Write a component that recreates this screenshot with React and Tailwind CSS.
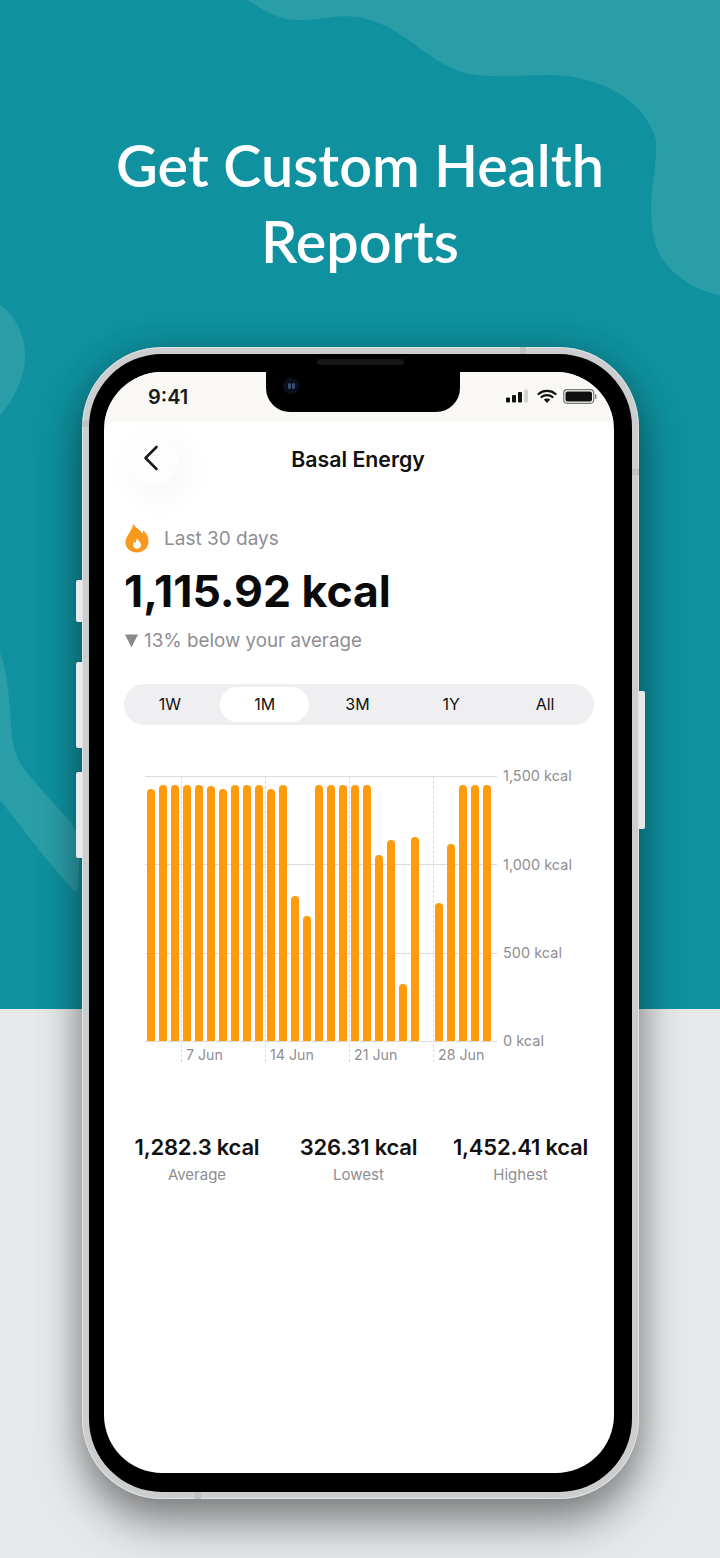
const TOP = 785;
const BASE = 1041.3;
const tops = [789.3,TOP,TOP,TOP,TOP,786.7,789.3,TOP,TOP,TOP,789.3,TOP,896.3,916,TOP,TOP,TOP,TOP,TOP,855.7,840.3,984,837.7,null,903,844,TOP,TOP,TOP];
const grid = [["1,500 kcal",0],["1,000 kcal",88.5],["500 kcal",177],["0 kcal",265]];
const ranges = ["1W","1M","3M","1Y","All"];
const ticks = ["7 Jun","14 Jun","21 Jun","28 Jun"];
const stats = [["1,282.3 kcal","Average"],["326.31 kcal","Lowest"],["1,452.41 kcal","Highest"]];

function Flame(){return(
  <svg width="24" height="30" viewBox="0 0 24 30" className="shrink-0">
    <path d="M8.500 0.500c.2 3 3.500 4.300 6.500 7 1 1 1.700 2 2.200 3 .7-.7 1-1.800.9-3.200 3 2.600 5.400 6.200 5.400 11 0 6.500-4.800 11.200-11.500 11.200S.5 25 .5 19.500c0-4 1.800-6.500 3.800-9.500C6 7 7.800 4 8.500 .5z" fill="#f8981d"/>
    <path d="M12.300 15.500c.4 1.800 3.700 3.200 3.700 6.400 0 2.200-1.800 3.800-4 3.800s-4-1.600-4-3.700c0-1.300.6-2.400 1.500-3.200.2.800.6 1.300 1.200 1.500-.2-1.800.3-3.500 1.600-4.800z" fill="#fff"/>
  </svg>
)}

export default function App(){
  return(
    <div className="relative w-[720px] h-[1558px] overflow-hidden bg-[#e6e8ea] font-['Inter',sans-serif]">
      <div className="absolute inset-x-0 top-0 h-[1009px] bg-[#0f919f]"/>
      <svg className="absolute left-0 top-0" width="720" height="1009" viewBox="0 0 720 1009">
        <path fill="#2a9ea8" d="M248 0C268 14 280 20 298 20C320 20 338 14 358 17C385 22 400 35 413 43C435 60 452 72 477 75C510 79 540 72 573 77C610 84 632 100 642 113C652 128 656 135 656 143C657 170 650 190 651 213C652 235 656 250 663 260C678 280 700 292 720 295L720 0Z"/>
        <path fill="#2a9ea8" d="M0 305C15 315 25 335 25 355C25 380 12 402 0 415Z"/>
        <path fill="#2a9ea8" d="M0 653C6 665 9 690 12 736C14 752 18 762 28 774C40 788 55 805 67 818C76 828 80 840 80 850L78 889C76 892 74 891 72 889L43 855L0 800Z"/>
      </svg>
      <div className="relative flex flex-col items-start">
        <h1 className="w-full pt-[127px] text-center text-[57.500px] leading-[76px] font-semibold text-white font-['Lato',sans-serif]">
          Get Custom Health<br/>Reports
        </h1>
        <div className="relative mt-[68px] ml-[82px] w-[557px] h-[1152px] rounded-[80px] bg-[#cbcdce] p-[7px] shadow-[0_24px_44px_rgba(0,0,0,0.42),0_0_34px_rgba(0,0,0,0.14),inset_0_0_0_1px_rgba(255,255,255,0.45)]">
          <div className="absolute left-[-6px] top-[233px] w-[6px] h-[42px] rounded-l-[2px] bg-[#e6e9e9]"/>
          <div className="absolute left-[-6px] top-[315px] w-[6px] h-[86px] rounded-l-[2px] bg-[#e6e9e9]"/>
          <div className="absolute left-[-6px] top-[425px] w-[6px] h-[86px] rounded-l-[2px] bg-[#e6e9e9]"/>
          <div className="absolute right-[-6px] top-[344px] w-[6px] h-[138px] rounded-r-[2px] bg-[#e6e9e9]"/>
          <div className="absolute left-[438px] top-0 w-[6px] h-[7px] bg-[#bfc1c2]"/>
          <div className="absolute left-[113px] bottom-0 w-[6px] h-[7px] bg-[#bfc1c2]"/>
          <div className="absolute left-0 top-[74px] w-[7px] h-[6px] bg-[#bfc1c2]"/>
          <div className="absolute right-0 top-[122px] w-[7px] h-[6px] bg-[#bfc1c2]"/>
          <div className="w-full h-full rounded-[73px] bg-black pt-[18px] pl-[15px]">
            <div className="absolute left-[235px] top-[12px] w-[87px] h-[6px] rounded-full bg-[#171717]"/>
            <div className="relative w-[510px] h-[1101px] rounded-[58px] overflow-hidden bg-white">
              {/* notch */}
              <div className="absolute left-[162px] top-0 w-[194px] h-[40px] rounded-b-[24px] bg-black flex items-start">
                <div className="ml-[17px] mt-[6px] w-[16px] h-[16px] rounded-full bg-[#0a0f1c] flex items-center justify-center gap-[1px]">
                  <div className="w-[3px] h-[6px] rounded-full bg-[#3a4e74]"/>
                  <div className="w-[3px] h-[6px] rounded-full bg-[#3a4e74]"/>
                </div>
              </div>
              {/* status */}
              <div className="h-[50px] bg-[#f9f8f5] flex items-center">
                <span className="ml-[44px] w-[60px] text-[20px] leading-[24px] font-semibold text-[#1a1a1a]">9:41</span>
                <div className="ml-[297px] flex items-center -mt-[2px]">
                  <svg width="24" height="14" viewBox="0 0 24 14" className="mr-[8px]">
                    <rect x="1" y="8.500" width="4" height="5" rx="1" fill="#111"/>
                    <rect x="7" y="6" width="4" height="7.500" rx="1" fill="#111"/>
                    <rect x="13" y="3" width="4" height="10.500" rx="1" fill="#111"/>
                    <rect x="19" y="0.500" width="4" height="13" rx="1" fill="#d5d4d1"/>
                  </svg>
                  <svg width="20" height="14" viewBox="0 0 20 14" className="mr-[6px]">
                    <path d="M1.500 5C6 .8 14 .8 18.500 5M4.500 8c2.800-2.500 8.200-2.500 11 0" fill="none" stroke="#111" strokeWidth="2.200" strokeLinecap="round"/>
                    <path d="M10 14l-3.200-3.500c1.700-1.400 4.700-1.400 6.400 0z" fill="#111"/>
                  </svg>
                  <svg width="34" height="15" viewBox="0 0 34 15">
                    <rect x="0.700" y="0.700" width="30" height="13.600" rx="3.500" fill="none" stroke="#777" strokeWidth="1.200"/>
                    <rect x="2.500" y="2.500" width="26.500" height="10" rx="2" fill="#111"/>
                    <rect x="32" y="5" width="1.500" height="5" rx="0.700" fill="#888"/>
                  </svg>
                </div>
              </div>
              {/* header */}
              <div className="relative h-[72px] flex items-center justify-center">
                <div className="absolute left-[21px] top-[9px] w-[54px] h-[54px] rounded-full bg-[#fdfdfd] shadow-[8px_12px_34px_rgba(0,0,0,0.045)] flex items-center justify-center">
                  <svg width="18" height="26" viewBox="0 0 18 26" className="-ml-[3px]"><path d="M14.500 2L3.500 13l11 11" fill="none" stroke="#1c1c1e" strokeWidth="2.600" strokeLinecap="round" strokeLinejoin="round"/></svg>
                </div>
                <span className="-ml-[2px] mt-[2px] text-[21.300px] leading-[28px] font-semibold text-[#111]">Basal Energy</span>
              </div>
              <div className="px-[20px]">
                <div className="mt-[29px] flex items-center h-[30px]">
                  <div className="ml-[1px]"><Flame/></div>
                  <span className="ml-[15px] mt-[1px] text-[19px] leading-[26px] text-[#8e8e93]">Last 30 days</span>
                </div>
                <div className="mt-[13px] text-[44.500px] leading-[50px] font-bold text-[#0a0a0a]">1,115.92 kcal</div>
                <div className="mt-[12px] flex items-center h-[26px] text-[18.800px] text-[#8e8e93]">
                  <svg width="13" height="14" viewBox="0 0 13 14" className="ml-[1px] mr-[6px]"><path d="M0 0.500H13L6.500 13.500Z" fill="#8a8a8e"/></svg>
                  13% below your average
                </div>
                <div className="mt-[30px] h-[41px] rounded-full bg-[#efeff1] flex items-center">
                  {ranges.map((r,i)=>(
                    <div key={r} className="-ml-[0.200px] w-[94px] flex justify-center">
                      <div className={i===1
                        ? "w-[89px] h-[35px] pb-[2px] rounded-full bg-white flex items-center justify-center text-[16px] text-[#111]"
                        : "w-[89px] h-[35px] pb-[2px] -translate-x-[1px] flex items-center justify-center text-[16px] text-[#111]"}>{r}</div>
                    </div>
                  ))}
                </div>
                {/* chart */}
                <div className="relative mt-[51px] ml-[21px] h-[286px]">
                  <div className="absolute left-[36px] top-0 h-[286px] flex">
                    {ticks.map(t=>(
                      <div key={t} className="w-[84px] h-[286px] border-l border-dashed border-[#dcdcde]"/>
                    ))}
                  </div>
                  {grid.map(([l,y])=>(
                    <div key={l} style={{top:y}} className="absolute left-0 h-0 flex items-center">
                      <div className="w-[352px] h-px bg-[#dcdcde]"/>
                      <span className="ml-[6px] text-[14.500px] leading-[18px] whitespace-nowrap text-[#8e8e93]">{l}</span>
                    </div>
                  ))}
                  <div className="absolute left-[2px] top-0 h-[265px] flex items-end gap-[4px]">
                    {tops.map((t,i)=>(
                      <div key={i} className={t===null?"w-[8px]":"w-[8px] rounded-t-[4px] bg-[#ff9a0d]"} style={{height:t===null?0:BASE-t}}/>
                    ))}
                  </div>
                  <div className="absolute left-[41px] top-[270px] flex">
                    {ticks.map(t=>(
                      <div key={t} className="w-[84px] text-[14.200px] leading-[18px] text-[#8e8e93]">{t}</div>
                    ))}
                  </div>
                </div>
              </div>
              {/* stats */}
              <div className="mt-[71px] ml-[24px] flex">
                {stats.map(([v,l],i)=>(
                  <div key={l} className={i===0?"w-[138px] flex flex-col items-center":i===1?"w-[185px] flex flex-col items-center":"w-[139px] flex flex-col items-center"}>
                    <div className="h-[28px] text-[22px] leading-[28px] whitespace-nowrap font-semibold text-[#111] tracking-[-0.2px]">{v}</div>
                    <div className="mt-[4px] h-[20px] text-[15px] leading-[20px] text-[#8e8e93]">{l}</div>
                  </div>
                ))}
              </div>
            </div>
          </div>
        </div>
      </div>
    </div>
  );
}
